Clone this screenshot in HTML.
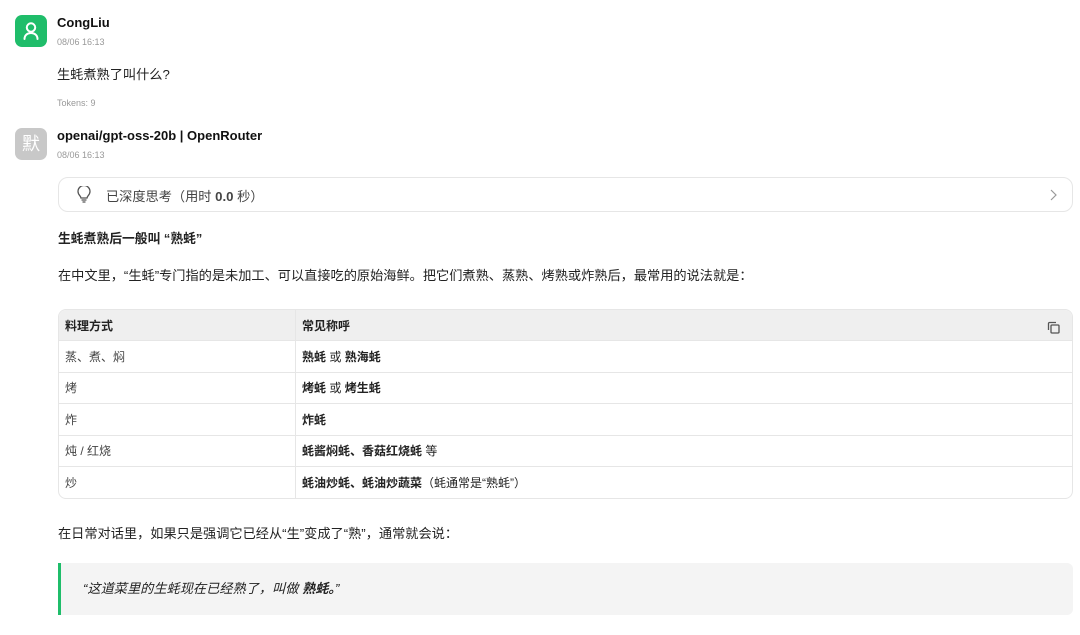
<!DOCTYPE html>
<html><head><meta charset="utf-8"><style>
*{margin:0;padding:0;box-sizing:border-box}
body{width:1080px;height:635px;overflow:hidden;background:#fff;font-family:"Liberation Sans","Noto Sans CJK SC",sans-serif;color:#222;position:relative}
.abs{position:absolute}
.av{width:32px;height:32px;border-radius:7px}
.name{font-size:13px;font-weight:bold;color:#111}
.time{font-size:9px;color:#999}
.p{font-size:13.2px;color:#222}
table{border-collapse:separate;border-spacing:0;width:1015px;font-size:12px;border:1px solid #e6e6e6;border-radius:8px;overflow:hidden}
td,th{height:31.4px;padding:0 6px;text-align:left;border-bottom:1px solid #e6e6e6}
tr:last-child td{border-bottom:none}
th{background:#efefef;font-weight:bold}
td:first-child,th:first-child{width:237px;border-right:1px solid #e6e6e6}
b{font-weight:bold}
.n{color:#444}
</style></head><body>
<div class="abs av" style="left:15px;top:15px;background:#1fbd6a">
<svg width="32" height="32" viewBox="0 0 32 32"><circle cx="16" cy="12.5" r="4.2" fill="none" stroke="#fff" stroke-width="2"/><path d="M9.5 24c0-3.8 2.8-6 6.5-6s6.5 2.2 6.5 6" fill="none" stroke="#fff" stroke-width="2" stroke-linecap="round"/></svg></div>
<div class="abs name" style="left:57px;top:15px">CongLiu</div>
<div class="abs time" style="left:57px;top:37px">08/06 16:13</div>
<div class="abs p" style="left:57px;top:64px">生蚝煮熟了叫什么?</div>
<div class="abs time" style="left:57px;top:98px">Tokens: 9</div>
<div class="abs av" style="left:15px;top:128px;background:#c8c8c8;color:#fff;font-size:18px;text-align:center;line-height:32px">默</div>
<div class="abs name" style="left:57px;top:128px">openai/gpt-oss-20b | OpenRouter</div>
<div class="abs time" style="left:57px;top:150px">08/06 16:13</div>
<div class="abs" style="left:58px;top:177px;width:1015px;height:35px;border:1px solid #e6e6e6;border-radius:10px">
<svg class="abs" style="left:18px;top:8px" width="14" height="18" viewBox="0 0 14 18"><path d="M4 12c0-2-3-3-3-6.5a6 6 0 0 1 12 0C13 9 10 10 10 12z" fill="none" stroke="#555" stroke-width="1.3"/><path d="M4.5 14h5M5.5 16h3" stroke="#555" stroke-width="1.3"/></svg>
<div class="abs p" style="left:47px;top:8px;color:#444">已深度思考（用时 <b>0.0</b> 秒）</div>
<svg class="abs" style="right:15px;top:11px" width="8" height="12" viewBox="0 0 8 12"><path d="M2 1l5 5-5 5" fill="none" stroke="#999" stroke-width="1.2"/></svg>
</div>
<div class="abs p" style="left:58px;top:228px;font-weight:bold;font-size:12.8px">生蚝煮熟后一般叫 “熟蚝”</div>
<div class="abs p" style="left:58px;top:265px">在中文里，“生蚝”专门指的是未加工、可以直接吃的原始海鲜。把它们煮熟、蒸熟、烤熟或炸熟后，最常用的说法就是：</div>
<div class="abs" style="left:58px;top:309px">
<table>
<tr><th>料理方式</th><th>常见称呼</th></tr>
<tr><td class="n">蒸、煮、焖</td><td><b>熟蚝</b> 或 <b>熟海蚝</b></td></tr>
<tr><td class="n">烤</td><td><b>烤蚝</b> 或 <b>烤生蚝</b></td></tr>
<tr><td class="n">炸</td><td><b>炸蚝</b></td></tr>
<tr><td class="n">炖 / 红烧</td><td><b>蚝酱焖蚝、香菇红烧蚝</b> 等</td></tr>
<tr><td class="n">炒</td><td><b>蚝油炒蚝、蚝油炒蔬菜</b>（蚝通常是“熟蚝”）</td></tr>
</table>
<svg class="abs" style="left:989px;top:12px" width="13" height="13" viewBox="0 0 13 13"><rect x="4" y="4" width="8" height="8" rx="1" fill="none" stroke="#555" stroke-width="1.3"/><path d="M1.5 9V2.5a1 1 0 0 1 1-1H9" fill="none" stroke="#555" stroke-width="1.3"/></svg>
</div>
<div class="abs p" style="left:58px;top:523px">在日常对话里，如果只是强调它已经从“生”变成了“熟”，通常就会说：</div>
<div class="abs" style="left:58px;top:563px;width:1015px;height:52px;background:#f4f4f4;border-left:3px solid #1fbd6a;border-radius:0 6px 6px 0">
<div class="abs p" style="left:22px;top:15px;font-style:italic">“这道菜里的生蚝现在已经熟了，叫做 <b>熟蚝。</b>”</div>
</div>
</body></html>
